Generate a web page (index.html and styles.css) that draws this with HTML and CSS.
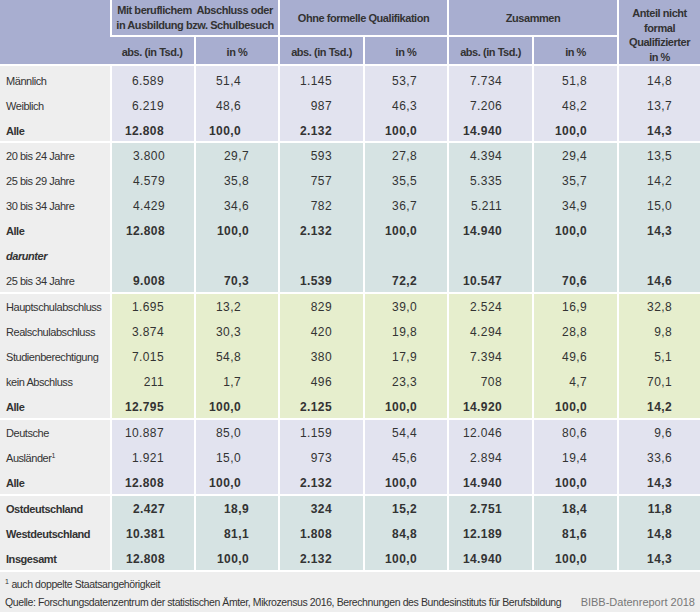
FILE: index.html
```html
<!DOCTYPE html>
<html lang="de">
<head>
<meta charset="utf-8">
<title>Tabelle</title>
<link rel="stylesheet" href="styles.css">
</head>
<body>
<div class="page">
<table class="tbl">
  <colgroup>
    <col class="c-label"><col class="c-n"><col class="c-n"><col class="c-n3"><col class="c-n"><col class="c-n3"><col class="c-n3"><col class="c-last">
  </colgroup>
  <thead>
    <tr class="h1">
      <th rowspan="2" class="first"></th>
      <th colspan="2">Mit beruflichem&nbsp; Abschluss oder<br>in Ausbildung bzw. Schulbesuch</th>
      <th colspan="2">Ohne formelle Qualifikation</th>
      <th colspan="2">Zusammen</th>
      <th rowspan="2" class="last">Anteil nicht<br>formal<br>Qualifizierter<br>in %</th>
    </tr>
    <tr class="h2">
      <th>abs. (in Tsd.)</th><th>in %</th>
      <th>abs. (in Tsd.)</th><th>in %</th>
      <th>abs. (in Tsd.)</th><th>in %</th>
    </tr>
  </thead>
  <tbody class="g-lav top">
    <tr><th>Männlich</th><td>6.589</td><td>51,4</td><td>1.145</td><td>53,7</td><td>7.734</td><td>51,8</td><td>14,8</td></tr>
    <tr><th>Weiblich</th><td>6.219</td><td>48,6</td><td>987</td><td>46,3</td><td>7.206</td><td>48,2</td><td>13,7</td></tr>
    <tr class="b"><th>Alle</th><td>12.808</td><td>100,0</td><td>2.132</td><td>100,0</td><td>14.940</td><td>100,0</td><td>14,3</td></tr>
  </tbody>
  <tbody class="g-teal alt">
    <tr><th>20 bis 24 Jahre</th><td>3.800</td><td>29,7</td><td>593</td><td>27,8</td><td>4.394</td><td>29,4</td><td>13,5</td></tr>
    <tr><th>25 bis 29 Jahre</th><td>4.579</td><td>35,8</td><td>757</td><td>35,5</td><td>5.335</td><td>35,7</td><td>14,2</td></tr>
    <tr><th>30 bis 34 Jahre</th><td>4.429</td><td>34,6</td><td>782</td><td>36,7</td><td>5.211</td><td>34,9</td><td>15,0</td></tr>
    <tr class="b"><th>Alle</th><td>12.808</td><td>100,0</td><td>2.132</td><td>100,0</td><td>14.940</td><td>100,0</td><td>14,3</td></tr>
    <tr><th class="it">darunter</th><td></td><td></td><td></td><td></td><td></td><td></td><td></td></tr>
    <tr class="b"><th class="reg">25 bis 34 Jahre</th><td>9.008</td><td>70,3</td><td>1.539</td><td>72,2</td><td>10.547</td><td>70,6</td><td>14,6</td></tr>
  </tbody>
  <tbody class="g-green">
    <tr><th>Hauptschulabschluss</th><td>1.695</td><td>13,2</td><td>829</td><td>39,0</td><td>2.524</td><td>16,9</td><td>32,8</td></tr>
    <tr><th>Realschulabschluss</th><td>3.874</td><td>30,3</td><td>420</td><td>19,8</td><td>4.294</td><td>28,8</td><td>9,8</td></tr>
    <tr><th>Studienberechtigung</th><td>7.015</td><td>54,8</td><td>380</td><td>17,9</td><td>7.394</td><td>49,6</td><td>5,1</td></tr>
    <tr><th>kein Abschluss</th><td>211</td><td>1,7</td><td>496</td><td>23,3</td><td>708</td><td>4,7</td><td>70,1</td></tr>
    <tr class="b"><th>Alle</th><td>12.795</td><td>100,0</td><td>2.125</td><td>100,0</td><td>14.920</td><td>100,0</td><td>14,2</td></tr>
  </tbody>
  <tbody class="g-lav">
    <tr><th>Deutsche</th><td>10.887</td><td>85,0</td><td>1.159</td><td>54,4</td><td>12.046</td><td>80,6</td><td>9,6</td></tr>
    <tr><th>Ausländer<sup>1</sup></th><td>1.921</td><td>15,0</td><td>973</td><td>45,6</td><td>2.894</td><td>19,4</td><td>33,6</td></tr>
    <tr class="b"><th>Alle</th><td>12.808</td><td>100,0</td><td>2.132</td><td>100,0</td><td>14.940</td><td>100,0</td><td>14,3</td></tr>
  </tbody>
  <tbody class="g-teal alt">
    <tr class="b"><th>Ostdeutschland</th><td>2.427</td><td>18,9</td><td>324</td><td>15,2</td><td>2.751</td><td>18,4</td><td>11,8</td></tr>
    <tr class="b"><th>Westdeutschland</th><td>10.381</td><td>81,1</td><td>1.808</td><td>84,8</td><td>12.189</td><td>81,6</td><td>14,8</td></tr>
    <tr class="b"><th>Insgesamt</th><td>12.808</td><td>100,0</td><td>2.132</td><td>100,0</td><td>14.940</td><td>100,0</td><td>14,3</td></tr>
  </tbody>
</table>
<div class="foot">
  <div class="note"><sup>1</sup> auch doppelte Staatsangehörigkeit</div>
  <div class="src">
    <span>Quelle: Forschungsdatenzentrum der statistischen Ämter, Mikrozensus 2016, Berechnungen des Bundesinstituts für Berufsbildung</span>
    <span class="brand">BIBB-Datenreport 2018</span>
  </div>
</div>
</div>
</body>
</html>
```

FILE: styles.css
```css
html, body {
  margin: 0;
  padding: 0;
  background: #eeeeee;
}
body {
  font-family: "Liberation Sans", Arial, sans-serif;
  font-size: 12px;
  color: #333333;
}
.page {
  width: 700px;
  height: 612px;
  overflow: hidden;
  background: #eeeeee;
  display: flex;
  flex-direction: column;
}
.tbl {
  width: 700px;
  table-layout: fixed;
  border-collapse: separate;
  border-spacing: 0;
  flex: none;
}
.c-label { width: 110px; }
.c-n { width: 84px; }
.c-n3 { width: 85px; }
.c-last { width: 83px; }

.tbl th, .tbl td {
  padding: 0;
  border-left: 2px solid #ffffff;
  box-sizing: border-box;
}
.tbl th:first-child, .tbl thead .first { border-left: none; }

.tbl thead th {
  background: #a8aed0;
  font-weight: bold;
  font-size: 11px;
  letter-spacing: -0.45px;
  text-align: center;
  line-height: 15px;
  white-space: nowrap;
  color: #333333;
}
.tbl .h1 { height: 37px; }
.tbl .h2 { height: 29px; }
.tbl .h1 th { border-bottom: 2px solid #ffffff; padding-top: 1px; }
.tbl .h2 th { border-bottom: 2px solid #ffffff; padding-top: 3px; }
.tbl .h1 th.last { line-height: 14.5px; padding-top: 6px; vertical-align: top; }

.tbl tbody th {
  background: #eeeeee;
  font-weight: normal;
  font-size: 11px;
  letter-spacing: -0.45px;
  text-align: left;
  padding-left: 6px;
  padding-top: 2px;
  white-space: nowrap;
}
.tbl tbody td {
  text-align: right;
  font-size: 12px;
  letter-spacing: 0.4px;
  padding-top: 2px;
}
.tbl tbody.top th, .tbl tbody.top td { padding-top: 5px; }
.tbl tbody tr { height: 25px; }
.tbl tbody + tbody tr:first-child { height: 26px; }
.tbl tbody + tbody tr:first-child th,
.tbl tbody + tbody tr:first-child td {
  border-top: 2px solid #ffffff;
}
.tbl tbody td:nth-child(2) { padding-right: 30px; }
.tbl tbody td:nth-child(3) { padding-right: 37px; }
.tbl tbody td:nth-child(4) { padding-right: 31px; }
.tbl tbody td:nth-child(5) { padding-right: 30px; }
.tbl tbody td:nth-child(6) { padding-right: 30px; }
.tbl tbody td:nth-child(7) { padding-right: 30px; }
.tbl tbody td:nth-child(8) { padding-right: 28px; }
.tbl tbody.alt td:nth-child(2) { padding-right: 29px; }
.tbl tbody.alt td:nth-child(3) { padding-right: 29px; }

.g-lav td { background: #e2e3ef; }
.g-teal td { background: #d6e3e3; }
.g-green td { background: #e6eecd; }

.tbl tr.b th, .tbl tr.b td { font-weight: bold; }
.tbl tr.b th.reg { font-weight: normal; }
.tbl tbody th.it { font-style: italic; font-weight: bold; }

sup {
  font-size: 7px;
  line-height: 0;
  vertical-align: 4px;
  letter-spacing: 0;
}

.foot {
  border-top: 2px solid #ffffff;
  padding: 3px 5px 0 5px;
  font-size: 10.5px;
  letter-spacing: -0.4px;
  color: #333333;
}
.note { height: 18px; line-height: 18px; }
.src {
  display: flex;
  justify-content: space-between;
  line-height: 19px;
  white-space: nowrap;
}
.brand { color: #777777; letter-spacing: 0; font-size: 11px; }
```
